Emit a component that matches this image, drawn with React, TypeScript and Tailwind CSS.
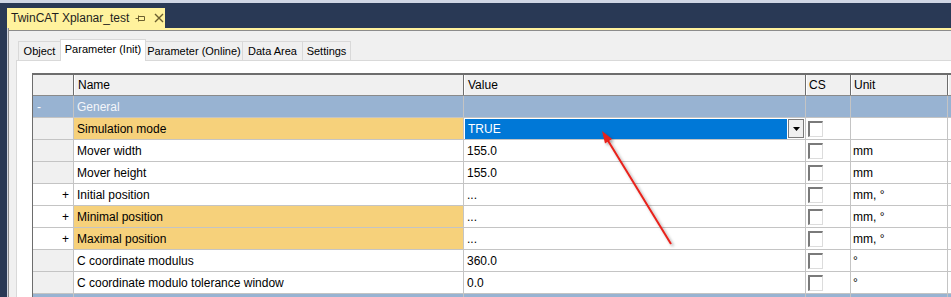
import React from 'react';

type Row = {
  name: string;
  value: string;
  unit?: string;
  kind?: 'group' | 'plus' | 'plain';
  highlight?: boolean;
  selected?: boolean;
};

const rows: Row[] = [
  { name: 'General', value: '', kind: 'group' },
  { name: 'Simulation mode', value: 'TRUE', highlight: true, selected: true },
  { name: 'Mover width', value: '155.0', unit: 'mm' },
  { name: 'Mover height', value: '155.0', unit: 'mm' },
  { name: 'Initial position', value: '...', unit: 'mm, °', kind: 'plus' },
  { name: 'Minimal position', value: '...', unit: 'mm, °', kind: 'plus', highlight: true },
  { name: 'Maximal position', value: '...', unit: 'mm, °', kind: 'plus', highlight: true },
  { name: 'C coordinate modulus', value: '360.0', unit: '°' },
  { name: 'C coordinate modulo tolerance window', value: '0.0', unit: '°' },
  { name: '', value: '', kind: 'group' },
];

const tabs = [
  { label: 'Object', w: 'w-[42px]' },
  { label: 'Parameter (Init)', w: 'w-[86px]' },
  { label: 'Parameter (Online)', w: 'w-[97px]' },
  { label: 'Data Area', w: 'w-[60px]' },
  { label: 'Settings', w: 'w-[48px]' },
];

function CheckBox() {
  return (
    <div className="w-[15px] h-[16px] bg-white border-t-2 border-l-2 border-t-[#7a7a7a] border-l-[#7a7a7a] border-r border-b border-r-[#dcdcdc] border-b-[#dcdcdc]" />
  );
}

function GridRow({ row }: { row: Row }) {
  const group = row.kind === 'group';
  const cell = 'h-full border-r border-[#c4c4c4] flex items-center';
  return (
    <div className={`flex h-[22px] shrink-0 border-b border-[#c4c4c4] ${group ? 'bg-[#98b3d2]' : 'bg-white'}`}>
      <div
        className={`${cell} w-[41px] shrink-0 ${
          group ? 'justify-start pl-[4px] text-white' : row.kind === 'plus' ? 'justify-end pr-[4px] bg-white' : 'bg-[#f0f0f0]'
        }`}
      >
        {group && row.name ? '-' : row.kind === 'plus' ? '+' : ''}
      </div>
      <div className={`${cell} w-[390px] shrink-0 pl-[3px] ${group ? 'text-[#f4f6fa]' : ''} ${row.highlight ? 'bg-[#f6d17b]' : ''}`}>
        {row.name}
      </div>
      <div className={`${cell} w-[342px] shrink-0 ${row.selected ? '' : 'pl-[3px]'}`}>
        {row.selected ? (
          <div className="flex h-full w-full items-center pl-[1px] pr-[1px] py-[1px]">
            <div className="h-[20px] flex-1 bg-[#0078d7] text-white flex items-center pl-[3px]">{row.value}</div>
            <div className="ml-[1px] h-[19px] w-[16px] bg-[#f0f0f0] border border-[#7a7a7a] flex items-center justify-center">
              <svg width="7" height="4" viewBox="0 0 7 4">
                <path d="M0 0 H7 L3.5 4 Z" fill="#000" />
              </svg>
            </div>
          </div>
        ) : (
          row.value
        )}
      </div>
      <div className={`${cell} w-[45px] shrink-0 pl-[2px]`}>{!group && <CheckBox />}</div>
      <div className={`${cell} w-[97px] shrink-0 pl-[2px]`}>{row.unit}</div>
      <div className="h-full flex-1" />
    </div>
  );
}

export default function App() {
  return (
    <div
      className="relative w-[951px] h-[297px] overflow-hidden bg-[#293955] text-[12px] text-black"
      style={{ fontFamily: '"Liberation Sans", Arial, sans-serif' }}
    >
      {/* Top strip */}
      <div className="h-[3px] bg-[#cfd6e4]" />
      {/* Document tab bar */}
      <div className="h-[25px] flex items-end pl-[7px]">
        <div className="h-[20px] w-[158px] shrink-0 bg-[#fff29d] flex items-center pl-[4px] text-[#1e1e1e] whitespace-nowrap">
          <span>TwinCAT Xplanar_test</span>
          <svg className="ml-[6px] shrink-0" width="11" height="10" viewBox="0 0 11 10">
            <path d="M0.5 5.5 H3.5 M3.5 2.5 V8.5 M3.5 3.5 H9.5 V7.5 H3.5" stroke="#6b5f30" strokeWidth="1" fill="none" />
          </svg>
          <svg className="ml-[8px] shrink-0" width="10" height="10" viewBox="0 0 10 10">
            <path d="M1 1 L9 9 M9 1 L1 9" stroke="#6b5f30" strokeWidth="1.4" />
          </svg>
        </div>
      </div>
      {/* Body */}
      <div className="flex h-[269px] overflow-hidden">
        <div className="w-[7px] shrink-0 bg-[#293955]" />
        <div className="w-[1px] shrink-0 bg-[#d0d5de]" />
        <div className="flex-1 flex flex-col border-l border-[#8c8c8c] bg-[#f0f0f0]">
          <div className="h-[2px] shrink-0 bg-[#fff29d]" />
          <div className="h-[1px] shrink-0 bg-[#8c8c8c]" />
          <div className="flex-1 flex flex-col pt-[8px] pl-[7px]">
            {/* Page tabs */}
            <div className="flex items-end h-[21px] shrink-0 pl-[2px] relative z-10 text-[11px]">
              {tabs.map((t, i) =>
                i === 1 ? (
                  <div
                    key={t.label}
                    className={`${t.w} h-[22px] -mb-[1px] shrink-0 bg-white border border-b-0 border-[#d9d9d9] pb-[3px] flex items-center justify-center whitespace-nowrap`}
                  >
                    {t.label}
                  </div>
                ) : (
                  <div
                    key={t.label}
                    className={`${t.w} h-[19px] shrink-0 bg-[#f0f0f0] border border-b-0 border-[#d9d9d9] flex items-center justify-center whitespace-nowrap ${i > 1 ? 'border-l-0' : 'border-r-0'}`}
                  >
                    {t.label}
                  </div>
                )
              )}
            </div>
            {/* Tab page */}
            <div className="flex-1 shrink-0 bg-white border-l border-t border-[#d9d9d9] pt-[12px] pl-[15px]">
              <div className="border-l border-[#6d6d6d]">
                {/* Header */}
                <div className="flex h-[23px] shrink-0 border-t-2 border-b border-t-[#6d6d6d] border-b-[#8a8a8a] bg-[#f0f0f0]">
                  <div className="w-[41px] shrink-0 border-r border-[#6d6d6d]" />
                  <div className="w-[390px] shrink-0 border-r border-[#6d6d6d] border-l border-l-white pl-[3px] flex items-center">Name</div>
                  <div className="w-[342px] shrink-0 border-r border-[#6d6d6d] border-l border-l-white pl-[3px] flex items-center">Value</div>
                  <div className="w-[45px] shrink-0 border-r border-[#6d6d6d] border-l border-l-white pl-[2px] flex items-center">CS</div>
                  <div className="w-[97px] shrink-0 border-r border-[#6d6d6d] border-l border-l-white pl-[2px] flex items-center">Unit</div>
                  <div className="flex-1 border-l border-l-white" />
                </div>
                {rows.map((r, i) => (
                  <GridRow key={i} row={r} />
                ))}
              </div>
            </div>
          </div>
        </div>
      </div>
      {/* Annotation arrow */}
      <svg className="absolute left-0 top-0 pointer-events-none" width="951" height="297">
        <defs>
          <filter id="sh" x="-20%" y="-20%" width="140%" height="140%">
            <feDropShadow dx="2" dy="2" stdDeviation="1.5" floodColor="#000" floodOpacity="0.35" />
          </filter>
        </defs>
        <g filter="url(#sh)">
          <line x1="671" y1="244" x2="607" y2="139" stroke="#e8201a" strokeWidth="2" />
          <path d="M602 131 L612 139 L605 143.5 Z" fill="#e8201a" />
        </g>
      </svg>
    </div>
  );
}
